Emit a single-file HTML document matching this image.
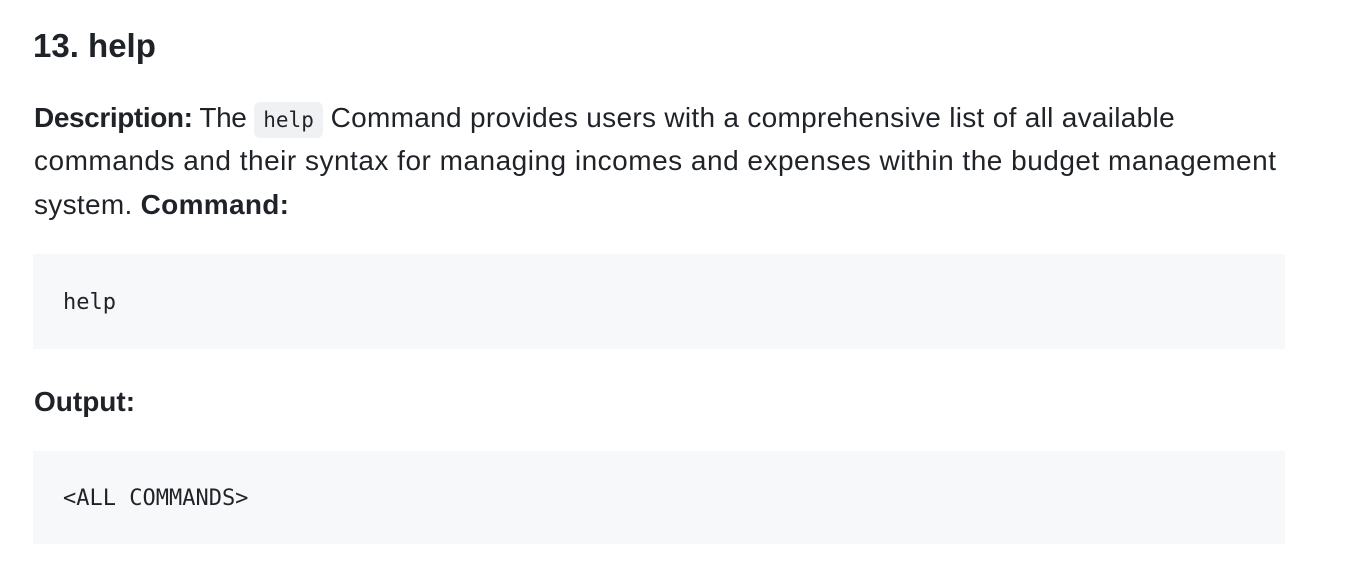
<!DOCTYPE html>
<html><head><style>
body{margin:0;background:#fff;color:#1f2328;font-family:"Liberation Sans",sans-serif;width:1346px;height:579px;overflow:hidden}
.h{position:absolute;left:33px;top:24px;font-size:33px;font-weight:bold;line-height:44px}
.p{position:absolute;left:34px;font-size:28px;line-height:44px;white-space:nowrap}
code{font-family:"DejaVu Sans Mono","Liberation Mono",monospace;font-size:21px;background:#eff1f3;border-radius:6px;padding:6px 9px;letter-spacing:0}
.pre{position:absolute;left:33px;width:1252px;background:#f6f8fa;font-family:"DejaVu Sans Mono","Liberation Mono",monospace;font-size:22px;line-height:24px}
.pre span{position:absolute;left:30px}
</style></head><body>
<div class="h">13. help</div>
<div class="p" style="top:96px"><span style="letter-spacing:-0.4px"><b>Description:</b> The</span> <code>help</code> <span style="letter-spacing:0.3px">Command provides users with a comprehensive list of all available</span></div>
<div class="p" style="top:139px;letter-spacing:0.5px">commands and their syntax for managing incomes and expenses within the budget management</div>
<div class="p" style="top:183px;letter-spacing:0.3px">system. <b>Command:</b></div>
<div class="pre" style="top:254px;height:95px"><span style="top:37px">help</span></div>
<div class="p" style="top:380px"><b>Output:</b></div>
<div class="pre" style="top:451px;height:93px"><span style="top:36px">&lt;ALL COMMANDS&gt;</span></div>
</body></html>
